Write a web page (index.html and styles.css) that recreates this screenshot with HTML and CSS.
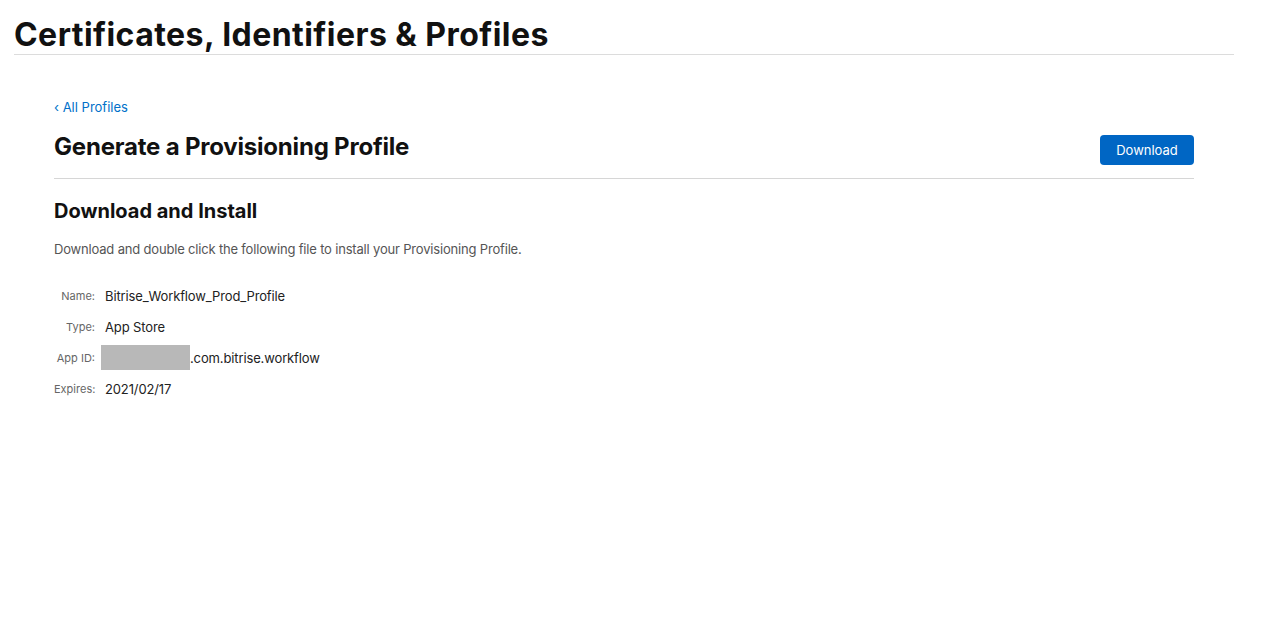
FILE: index.html
```html
<!DOCTYPE html>
<html>
<head>
<meta charset="utf-8">
<link rel="stylesheet" href="styles.css">
</head>
<body>
<header class="top">
  <h1 class="top-title">Certificates, Identifiers &amp; Profiles</h1>
</header>
<main class="content">
  <a class="back" href="#">‹ All Profiles</a>
  <div class="head-row">
    <h2 class="page-title">Generate a Provisioning Profile</h2>
    <button class="btn">Download</button>
  </div>
  <section class="section">
    <h3 class="section-title">Download and Install</h3>
    <p class="desc">Download and double click the following file to install your Provisioning Profile.</p>
    <dl class="details">
      <div class="row"><dt>Name:</dt><dd>Bitrise_Workflow_Prod_Profile</dd></div>
      <div class="row"><dt>Type:</dt><dd>App Store</dd></div>
      <div class="row"><dt>App ID:</dt><dd><span class="redact"></span>.com.bitrise.workflow</dd></div>
      <div class="row"><dt>Expires:</dt><dd>2021/02/17</dd></div>
    </dl>
  </section>
</main>
</body>
</html>
```
FILE: styles.css
```css
* { box-sizing: border-box; }
body {
  margin: 0;
  background: #fff;
  font-family: Inter, "Noto Sans", sans-serif;
  color: #1d1d1f;
}
.top {
  margin: 0 41px 0 14px;
  border-bottom: 1px solid #dcdcdc;
  padding-top: 15px;
  height: 55px;
}
.top-title {
  margin: 0;
  font-size: 32px;
  font-weight: 700;
  line-height: 40px;
  letter-spacing: 0.45px;
  color: #111;
}
.content {
  margin: 0 81px 0 54px;
  padding-top: 43px;
}
.back {
  display: block;
  font-size: 13px;
  line-height: 18px;
  color: #0070c9;
  text-decoration: none;
}
.head-row {
  display: flex;
  justify-content: space-between;
  align-items: center;
  border-bottom: 1px solid #d6d6d6;
  padding: 12px 0 13px;
}
.page-title {
  margin: 0;
  font-size: 24px;
  font-weight: 700;
  line-height: 32px;
  letter-spacing: -0.2px;
  color: #111;
}
.btn {
  margin-top: 7px;
  width: 94px;
  height: 30px;
  border: none;
  border-radius: 4px;
  background: #0066c4;
  color: #fff;
  font-family: inherit;
  font-size: 13px;
}
.section { padding-top: 19px; }
.section-title {
  margin: 0;
  font-size: 20px;
  font-weight: 700;
  line-height: 26px;
  color: #111;
}
.desc {
  margin: 16px 0 0;
  font-size: 13px;
  line-height: 18px;
  letter-spacing: -0.18px;
  color: #555;
}
.details { margin: 22px 0 0; }
.row {
  display: flex;
  align-items: center;
  height: 31px;
}
.row dt {
  width: 41px;
  text-align: right;
  font-size: 11px;
  color: #666;
  margin-right: 10px;
}
.row dd {
  margin: 0;
  font-size: 13px;
  letter-spacing: -0.13px;
  color: #222;
  display: flex;
  align-items: center;
}
.redact {
  display: inline-block;
  width: 89px;
  height: 25px;
  background: #b8b8b8;
  margin-left: -4px;
}
```
